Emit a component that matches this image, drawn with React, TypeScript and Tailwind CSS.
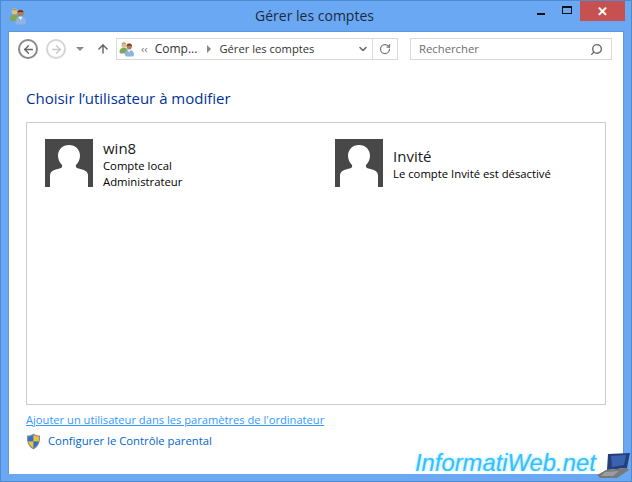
import { Search, RotateCw, ChevronDown, ArrowLeft, ArrowRight, ArrowUp } from "lucide-react";

const uiFont = "font-['Open_Sans','Noto_Sans',sans-serif]";

function UsersIcon({ className }: { className?: string }) {
  return (
    <svg viewBox="0 0 18 18" className={className}>
      <ellipse cx="5.500" cy="4.500" rx="2.800" ry="3.200" fill="#dcc089" />
      <path d="M3 3.500C3.500 1.500 7.500 1.500 8 3.500 6.500 3 4.500 3 3 3.500z" fill="#a98f4e" />
      <path d="M.5 12.500C.5 9 2.500 7.500 5.500 7.500s4.500 1.500 4.500 5l-1.500 1.500H1.500z" fill="#7fa75c" />
      <ellipse cx="11.500" cy="6" rx="3" ry="3.600" fill="#b57a52" />
      <path d="M8.500 5.500C8.500 2.500 14.500 2.500 14.500 5.500c-1.500-1-4.500-1-6 0z" fill="#4a2c1c" />
      <path d="M6.500 16C6.500 12 8.500 9.500 11.500 9.500s5.500 2.500 5.500 6.500l-1.500 1.500H8z" fill="#8fb5de" />
      <path d="M9.500 9.800h4L11.500 13z" fill="#f0f4f8" />
    </svg>
  );
}

function Avatar() {
  return (
    <svg viewBox="0 0 48 48" className="w-12 h-12 shrink-0">
      <rect width="48" height="48" fill="#484848" />
      <path
        d="M24 6c6.500 0 11 4.800 11 10.500 0 4.500-2 7.500-4 9.500-.5 1.500 0 3 2.500 3.500 5 1.200 9.500 2.500 9.500 7V48H5V36.500c0-4.500 4.500-5.800 9.500-7 2.500-.5 3-2 2.500-3.500-2-2-4-5-4-9.500C13 10.800 17.500 6 24 6z"
        fill="#fff"
      />
    </svg>
  );
}

function Shield() {
  return (
    <svg viewBox="0 0 15 17" className="w-[15px] h-[17px] shrink-0">
      <path d="M7.500.5c2 1.500 4 2 6.500 2 .5 6-1 11-6.500 14C2 13.500.5 8.500 1 2.500c2.500 0 4.500-.5 6.500-2z" fill="#8a8f94" />
      <path d="M7.500 2v6.500H2.300C2.200 7 2.100 5.500 2.200 3.600 4 3.500 6 3 7.500 2z" fill="#2f73c9" />
      <path d="M7.500 2c1.500 1 3.500 1.500 5.300 1.600.1 1.900 0 3.400-.1 4.900H7.500z" fill="#f2c230" />
      <path d="M2.300 8.500h5.200v6.400C4.500 13 3 11 2.300 8.500z" fill="#f2c230" />
      <path d="M7.500 8.500h5.200c-.7 2.500-2.200 4.500-5.200 6.400z" fill="#2f73c9" />
    </svg>
  );
}

function UserTile({ name, lines }: { name: string; lines: string[] }) {
  return (
    <div className="flex h-12 w-[290px] shrink-0 items-center gap-[10px]">
      <Avatar />
      <div className="pt-[3px] text-black">
        <div className="text-[15px] leading-[19px] text-[#1a1a1a]">{name}</div>
        {lines.map((line) => (
          <div key={line} className="text-[11.3px] leading-[16px]">
            {line}
          </div>
        ))}
      </div>
    </div>
  );
}

export default function App() {
  return (
    <div className={`relative w-[632px] h-[482px] overflow-hidden bg-[#6aa8f4] border border-[#4d8ad0] ${uiFont}`}>
      {/* title bar */}
      <div className="flex h-[30px] items-center pl-2">
        <UsersIcon className="w-[18px] h-[18px]" />
        <div className="flex-1 pb-[2px] pl-[74px] text-center text-[14px] text-[#1c2a3c]">Gérer les comptes</div>
        <div className="flex h-[20px] items-start self-start mr-[6px]">
          <div className="flex w-[26px] h-[20px] items-center justify-center">
            <div className="mt-[6px] w-2 h-[2px] bg-[#111]" />
          </div>
          <div className="flex w-[26px] h-[20px] items-center justify-center">
            <div className="w-[10px] h-[8px] border border-t-2 border-[#111] mt-[-2px]" />
          </div>
          <div className="flex w-[45px] h-[20px] items-center justify-center bg-[#c75050] text-[13px] font-bold leading-none text-white">
            ✕
          </div>
        </div>
      </div>

      {/* client area */}
      <div className="mx-[7px] h-[443px] bg-white border-x border-t border-[#5b98e0]">
        {/* nav row */}
        <div className="flex items-center h-[22px] mt-[6px] pl-[9px]">
          <div className="flex w-[20px] h-[20px] items-center justify-center rounded-full border-2 border-[#8a8a8a]">
            <ArrowLeft size={13} strokeWidth={2.5} className="text-[#666]" />
          </div>
          <div className="ml-2 flex w-[20px] h-[20px] items-center justify-center rounded-full border-2 border-[#d6d6d6]">
            <ArrowRight size={13} strokeWidth={2.5} className="text-[#c8c8c8]" />
          </div>
          <div className="ml-[10px] w-0 h-0 border-x-[4px] border-x-transparent border-t-[4px] border-t-[#888]" />
          <ArrowUp size={14} strokeWidth={2.5} className="ml-[12px] text-[#666]" />
          <div className="ml-[6px] flex h-[22px] w-[282px] items-center border border-[#d9d9d9] pl-[2px] text-[11.2px] text-[#333]">
            <UsersIcon className="w-4 h-4" />
            <span className="ml-[6px] text-[#777]">‹‹</span>
            <span className="ml-[7px] text-[12px]">Comp...</span>
            <span className="ml-[10px] w-0 h-0 border-y-[4px] border-y-transparent border-l-[4px] border-l-[#888]" />
            <span className="ml-[8px] flex-1">Gérer les comptes</span>
            <ChevronDown size={12} strokeWidth={3} className="mr-[3px] text-[#666]" />
            <div className="flex h-full w-[25px] items-center justify-center border-l border-[#d9d9d9]">
              <RotateCw size={12} strokeWidth={2.5} className="text-[#777]" />
            </div>
          </div>
          <div className="ml-3 flex h-[22px] w-[202px] items-center justify-between border border-[#d9d9d9] pl-2 pr-2 text-[11.3px] text-[#6d6d6d]">
            Rechercher
            <Search size={13} strokeWidth={2.5} className="-scale-x-100 text-[#666]" />
          </div>
        </div>

        <div className="mx-[17px]">
          <h1 className="mt-[28px] text-[15px] leading-[20px] font-normal text-[#003399]">Choisir l’utilisateur à modifier</h1>
          <div className="mt-[14px] flex h-[283px] items-start border border-[#cccccc] pl-[18px] pt-4">
            <UserTile name="win8" lines={["Compte local", "Administrateur"]} />
            <UserTile name="Invité" lines={["Le compte Invité est désactivé"]} />
          </div>
          <a className="mt-[7px] block text-[11.15px] leading-[16px] text-[#3399ff] underline">
            Ajouter un utilisateur dans les paramètres de l'ordinateur
          </a>
          <div className="mt-[5px] flex items-center gap-[7px] text-[11.3px] text-[#0066cc]">
            <Shield />
            <a>Configurer le Contrôle parental</a>
          </div>
        </div>
      </div>

      {/* watermark */}
      <div className="absolute left-[414px] top-[448px] flex items-end">
        <span className="font-['Liberation_Sans',sans-serif] text-[23.8px] leading-[28px] italic text-[#33c0ff] [text-shadow:0_0_3px_#8fdfff]">
          InformatiWeb.net
        </span>
        <svg viewBox="0 0 34 26" className="w-[34px] h-[26px] ml-[1px] mb-[-2px]">
          <path d="M11 1l22-1-3 15-20 2z" fill="#24407a" />
          <path d="M14 3l15-1-2 10-12 2z" fill="#3a62b0" />
          <path d="M9 17l21-2 2 2-12 8H3l-3-3z" fill="#77797c" />
          <path d="M8 19l14-1-6 5H4z" fill="#9a9c9e" />
        </svg>
      </div>
    </div>
  );
}
